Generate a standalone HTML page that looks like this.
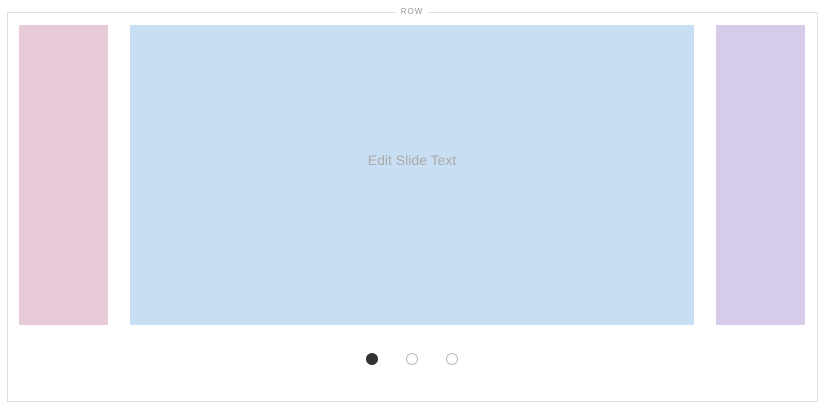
<!DOCTYPE html>
<html><head><style>
html,body{margin:0;padding:0;width:824px;height:410px;background:#fff;overflow:hidden;font-family:"Liberation Sans",sans-serif}
.box{position:absolute;left:7px;top:12px;width:809px;height:388px;border:1px solid #e0e0e0}
.lbl{position:absolute;left:396px;top:7px;width:32px;text-align:center;background:#fff;color:#999;font-size:8px;letter-spacing:1px;line-height:10px}
.s{position:absolute;top:25px;height:300px}
.dot{position:absolute;top:353px;width:10px;height:10px;border-radius:50%;border:1px solid #bbb;background:#fff}
</style></head><body>
<div class="box"></div>
<div class="lbl">ROW</div>
<div class="s" style="left:19px;width:89px;background:#e8cbd9"></div>
<div class="s" style="left:130px;width:564px;background:#c8dff3;color:#aaa;font-size:14px;text-align:center;line-height:270px">Edit Slide Text</div>
<div class="s" style="left:716px;width:89px;background:#d6cbe8"></div>
<div class="dot" style="left:366px;background:#333;border-color:#333"></div>
<div class="dot" style="left:406px"></div>
<div class="dot" style="left:446px"></div>
</body></html>
